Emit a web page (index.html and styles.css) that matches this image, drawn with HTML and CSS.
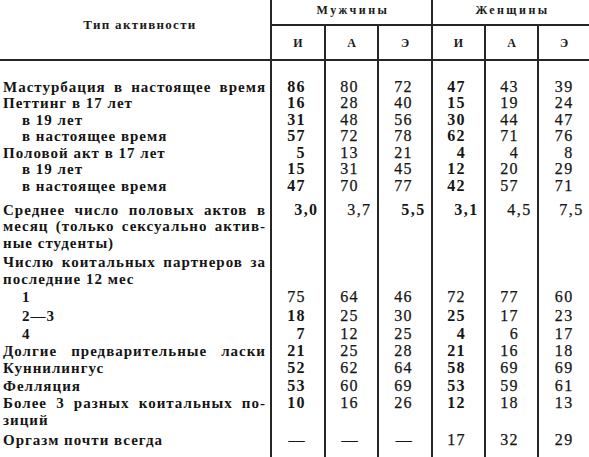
FILE: index.html
```html
<!DOCTYPE html>
<html lang="ru">
<head>
<meta charset="utf-8">
<title>Тип активности</title>
<link rel="stylesheet" href="styles.css">
</head>
<body>
<table class="tbl">
  <colgroup>
    <col class="c-lab"><col class="c1"><col class="c2"><col class="c3"><col class="c4"><col class="c5"><col class="c6">
  </colgroup>
  <thead>
    <tr class="h-row1">
      <th rowspan="2" class="h-type">Тип активности</th>
      <th colspan="3" class="h-grp">Мужчины</th>
      <th colspan="3" class="h-grp">Женщины</th>
    </tr>
    <tr class="h-row2">
      <th class="h-sub">И</th><th class="h-sub">А</th><th class="h-sub">Э</th>
      <th class="h-sub">И</th><th class="h-sub">А</th><th class="h-sub">Э</th>
    </tr>
  </thead>
  <tbody>
    <tr class="r-first">
      <td class="lab"><span class="ln j">Мастурбация в настоящее время</span></td>
      <td class="n b">86</td><td class="n">80</td><td class="n">72</td><td class="n b">47</td><td class="n">43</td><td class="n">39</td>
    </tr>
    <tr>
      <td class="lab"><span class="ln">Петтинг в 17 лет</span></td>
      <td class="n b">16</td><td class="n">28</td><td class="n">40</td><td class="n b">15</td><td class="n">19</td><td class="n">24</td>
    </tr>
    <tr>
      <td class="lab ind"><span class="ln">в 19 лет</span></td>
      <td class="n b">31</td><td class="n">48</td><td class="n">56</td><td class="n b">30</td><td class="n">44</td><td class="n">47</td>
    </tr>
    <tr>
      <td class="lab ind"><span class="ln">в настоящее время</span></td>
      <td class="n b">57</td><td class="n">72</td><td class="n">78</td><td class="n b">62</td><td class="n">71</td><td class="n">76</td>
    </tr>
    <tr>
      <td class="lab"><span class="ln">Половой акт в 17 лет</span></td>
      <td class="n b">5</td><td class="n">13</td><td class="n">21</td><td class="n b">4</td><td class="n">4</td><td class="n">8</td>
    </tr>
    <tr>
      <td class="lab ind"><span class="ln">в 19 лет</span></td>
      <td class="n b">15</td><td class="n">31</td><td class="n">45</td><td class="n b">12</td><td class="n">20</td><td class="n">29</td>
    </tr>
    <tr>
      <td class="lab ind"><span class="ln">в настоящее время</span></td>
      <td class="n b">47</td><td class="n">70</td><td class="n">77</td><td class="n b">42</td><td class="n">57</td><td class="n">71</td>
    </tr>
    <tr class="g-avg">
      <td class="lab">
        <span class="ln j">Среднее число половых актов в</span>
        <span class="ln j">месяц (только сексуально актив-</span>
        <span class="ln">ные студенты)</span>
      </td>
      <td class="n dec b">3,0</td><td class="n dec">3,7</td><td class="n dec b">5,5</td><td class="n dec b">3,1</td><td class="n dec">4,5</td><td class="n dec">7,5</td>
    </tr>
    <tr class="g-part">
      <td class="lab">
        <span class="ln j">Числю коитальных партнеров за</span>
        <span class="ln">последние 12 мес</span>
      </td>
      <td class="n"></td><td class="n"></td><td class="n"></td><td class="n"></td><td class="n"></td><td class="n"></td>
    </tr>
    <tr class="g2">
      <td class="lab ind"><span class="ln">1</span></td>
      <td class="n">75</td><td class="n">64</td><td class="n">46</td><td class="n">72</td><td class="n">77</td><td class="n">60</td>
    </tr>
    <tr class="g18">
      <td class="lab ind"><span class="ln">2—3</span></td>
      <td class="n b">18</td><td class="n">25</td><td class="n">30</td><td class="n b">25</td><td class="n">17</td><td class="n">23</td>
    </tr>
    <tr class="g22">
      <td class="lab ind"><span class="ln">4</span></td>
      <td class="n b">7</td><td class="n">12</td><td class="n">25</td><td class="n b">4</td><td class="n">6</td><td class="n">17</td>
    </tr>
    <tr class="g0">
      <td class="lab"><span class="ln j">Долгие предварительные ласки</span></td>
      <td class="n b">21</td><td class="n">25</td><td class="n">28</td><td class="n b">21</td><td class="n">16</td><td class="n">18</td>
    </tr>
    <tr class="g08">
      <td class="lab"><span class="ln">Куннилингус</span></td>
      <td class="n b">52</td><td class="n">62</td><td class="n">64</td><td class="n b">58</td><td class="n">69</td><td class="n">69</td>
    </tr>
    <tr class="g12">
      <td class="lab"><span class="ln">Фелляция</span></td>
      <td class="n b">53</td><td class="n">60</td><td class="n">69</td><td class="n b">53</td><td class="n">59</td><td class="n">61</td>
    </tr>
    <tr class="g08">
      <td class="lab">
        <span class="ln j">Более 3 разных коитальных по-</span>
        <span class="ln">зиций</span>
      </td>
      <td class="n b">10</td><td class="n">16</td><td class="n">26</td><td class="n b">12</td><td class="n">18</td><td class="n">13</td>
    </tr>
    <tr class="g-last">
      <td class="lab"><span class="ln">Оргазм почти всегда</span></td>
      <td class="n">—</td><td class="n">—</td><td class="n">—</td><td class="n">17</td><td class="n">32</td><td class="n">29</td>
    </tr>
  </tbody>
</table>
</body>
</html>
```

FILE: styles.css
```css
html, body {
  margin: 0;
  padding: 0;
  background: #ffffff;
  overflow: hidden;
}

body {
  width: 589px;
  height: 457px;
  font-family: "Liberation Serif", "Times New Roman", serif;
  color: #161616;
}

th, td {
  box-sizing: border-box;
  padding: 0;
}

.tbl {
  border-collapse: separate;
  border-spacing: 0;
  table-layout: fixed;
  width: 589px;
}

.c-lab { width: 270px; }
.c1 { width: 54px; }
.c2 { width: 53px; }
.c3 { width: 54px; }
.c4 { width: 53px; }
.c5 { width: 53px; }
.c6 { width: 52px; }

/* ---------- header ---------- */
.h-type,
.h-grp,
.h-sub {
  font-weight: bold;
  line-height: 14px;
  text-align: center;
  vertical-align: middle;
  color: #1a1a1a;
  border-bottom: 2px solid #262626;
}

.h-row1 > .h-grp { height: 26px; }
.h-row2 > .h-sub { height: 35px; }

.h-type {
  font-size: 13px;
  letter-spacing: 1.3px;
  padding: 0 0 10px 10px;
}

.h-grp {
  font-size: 12px;
  letter-spacing: 2.5px;
  padding: 0 0 4px 3px;
  border-left: 2px solid #262626;
}

.h-sub {
  font-size: 12px;
  border-left: 2px solid #262626;
}

/* ---------- body ---------- */
.lab,
.n {
  vertical-align: top;
}

.lab {
  font-weight: bold;
  font-size: 15px;
  line-height: 16.5px;
  letter-spacing: 1px;
  padding: 0 5px 0 3px;
  color: #141414;
}

.lab.ind { padding-left: 22px; }

.ln {
  display: block;
  height: 16.5px;
  text-align: left;
  white-space: nowrap;
}

.ln.j {
  text-align: justify;
  text-align-last: justify;
  margin-right: -1px;
}

.n {
  font-size: 16px;
  line-height: 16.5px;
  letter-spacing: 1.4px;
  text-align: right;
  padding-right: 18px;
  border-left: 2px solid #262626;
  color: #161616;
  -webkit-text-stroke: 0.25px #161616;
}

.n:last-child { padding-right: 15.5px; }
.n.dec { padding-right: 5.5px; }
.n.b {
  font-weight: bold;
  -webkit-text-stroke: 0;
}

.r-first > td { padding-top: 17.6px; }
.g-avg > td { padding-top: 7.8px; }
.g-part > td { padding-top: 2.9px; }
.g2 > td { padding-top: 2px; }
.g18 > td { padding-top: 1.8px; }
.g22 > td { padding-top: 2.2px; }
.g12 > td { padding-top: 1.2px; }
.g08 > td { padding-top: 0.8px; }
.g0 > td { padding-top: 0; }
.g-last > td { padding-top: 3.7px; padding-bottom: 9px; }
```
